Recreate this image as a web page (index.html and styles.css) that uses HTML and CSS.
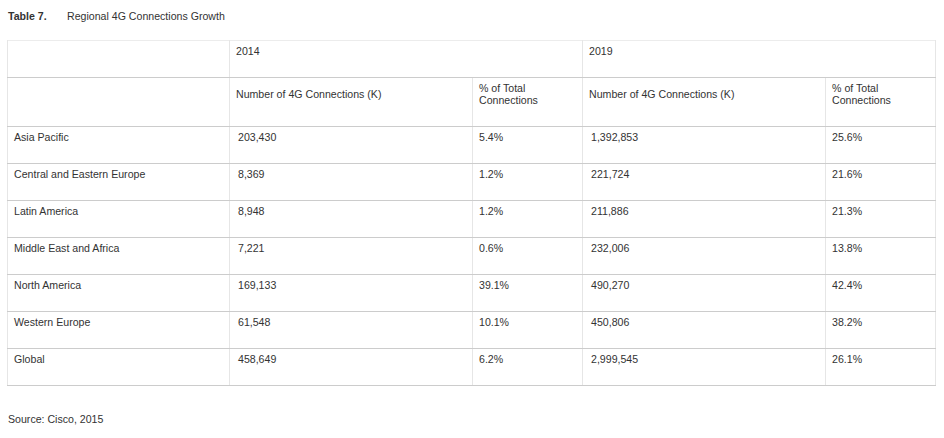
FILE: index.html
```html
<!DOCTYPE html>
<html lang="en">
<head>
<meta charset="utf-8">
<title>Table 7. Regional 4G Connections Growth</title>
<link rel="stylesheet" href="styles.css">
</head>
<body>
<div class="page">
  <p class="caption"><span class="caption-label">Table 7.</span><span class="caption-title">Regional 4G Connections Growth</span></p>
  <table class="data">
    <colgroup>
      <col class="c-region">
      <col class="c-num">
      <col class="c-pct">
      <col class="c-num">
      <col class="c-pct">
    </colgroup>
    <thead>
      <tr class="year-row">
        <th></th>
        <th colspan="2">2014</th>
        <th colspan="2">2019</th>
      </tr>
      <tr class="sub-row">
        <th></th>
        <th>Number of 4G Connections (K)</th>
        <th>% of Total<br>Connections</th>
        <th>Number of 4G Connections (K)</th>
        <th>% of Total<br>Connections</th>
      </tr>
    </thead>
    <tbody>
      <tr><td>Asia Pacific</td><td class="num">203,430</td><td>5.4%</td><td class="num">1,392,853</td><td>25.6%</td></tr>
      <tr><td>Central and Eastern Europe</td><td class="num">8,369</td><td>1.2%</td><td class="num">221,724</td><td>21.6%</td></tr>
      <tr><td>Latin America</td><td class="num">8,948</td><td>1.2%</td><td class="num">211,886</td><td>21.3%</td></tr>
      <tr><td>Middle East and Africa</td><td class="num">7,221</td><td>0.6%</td><td class="num">232,006</td><td>13.8%</td></tr>
      <tr><td>North America</td><td class="num">169,133</td><td>39.1%</td><td class="num">490,270</td><td>42.4%</td></tr>
      <tr><td>Western Europe</td><td class="num">61,548</td><td>10.1%</td><td class="num">450,806</td><td>38.2%</td></tr>
      <tr><td>Global</td><td class="num">458,649</td><td>6.2%</td><td class="num">2,999,545</td><td>26.1%</td></tr>
    </tbody>
  </table>
  <p class="source">Source: Cisco, 2015</p>
</div>
</body>
</html>
```

FILE: styles.css
```css
html, body {
  margin: 0;
  padding: 0;
  background: #ffffff;
}

body {
  font-family: "Liberation Sans", Arial, sans-serif;
  font-size: 10.6px;
  line-height: 12px;
  color: #333333;
}

.page {
  padding: 10px 7px 0 7px;
}

.caption {
  margin: 0 0 18px 1px;
  height: 12px;
}

.caption-label {
  font-weight: bold;
  display: inline-block;
  width: 59px;
}

.data {
  border-collapse: collapse;
  table-layout: fixed;
  width: 929px;
  border-top: 1px solid #ececec;
  border-left: 1px solid #e6e6e6;
  border-right: 1px solid #e6e6e6;
}

.c-region { width: 222px; }
.c-num { width: 243px; }
.c-pct { width: 110px; }

.data th,
.data td {
  font-weight: normal;
  text-align: left;
  vertical-align: middle;
  padding: 4px 6px 20px 6px;
  border-bottom: 1px solid #cccccc;
  border-left: 1px solid #e6e6e6;
}

.data td.num {
  padding-left: 8px;
}

.source {
  margin: 27px 0 0 1px;
}
```
